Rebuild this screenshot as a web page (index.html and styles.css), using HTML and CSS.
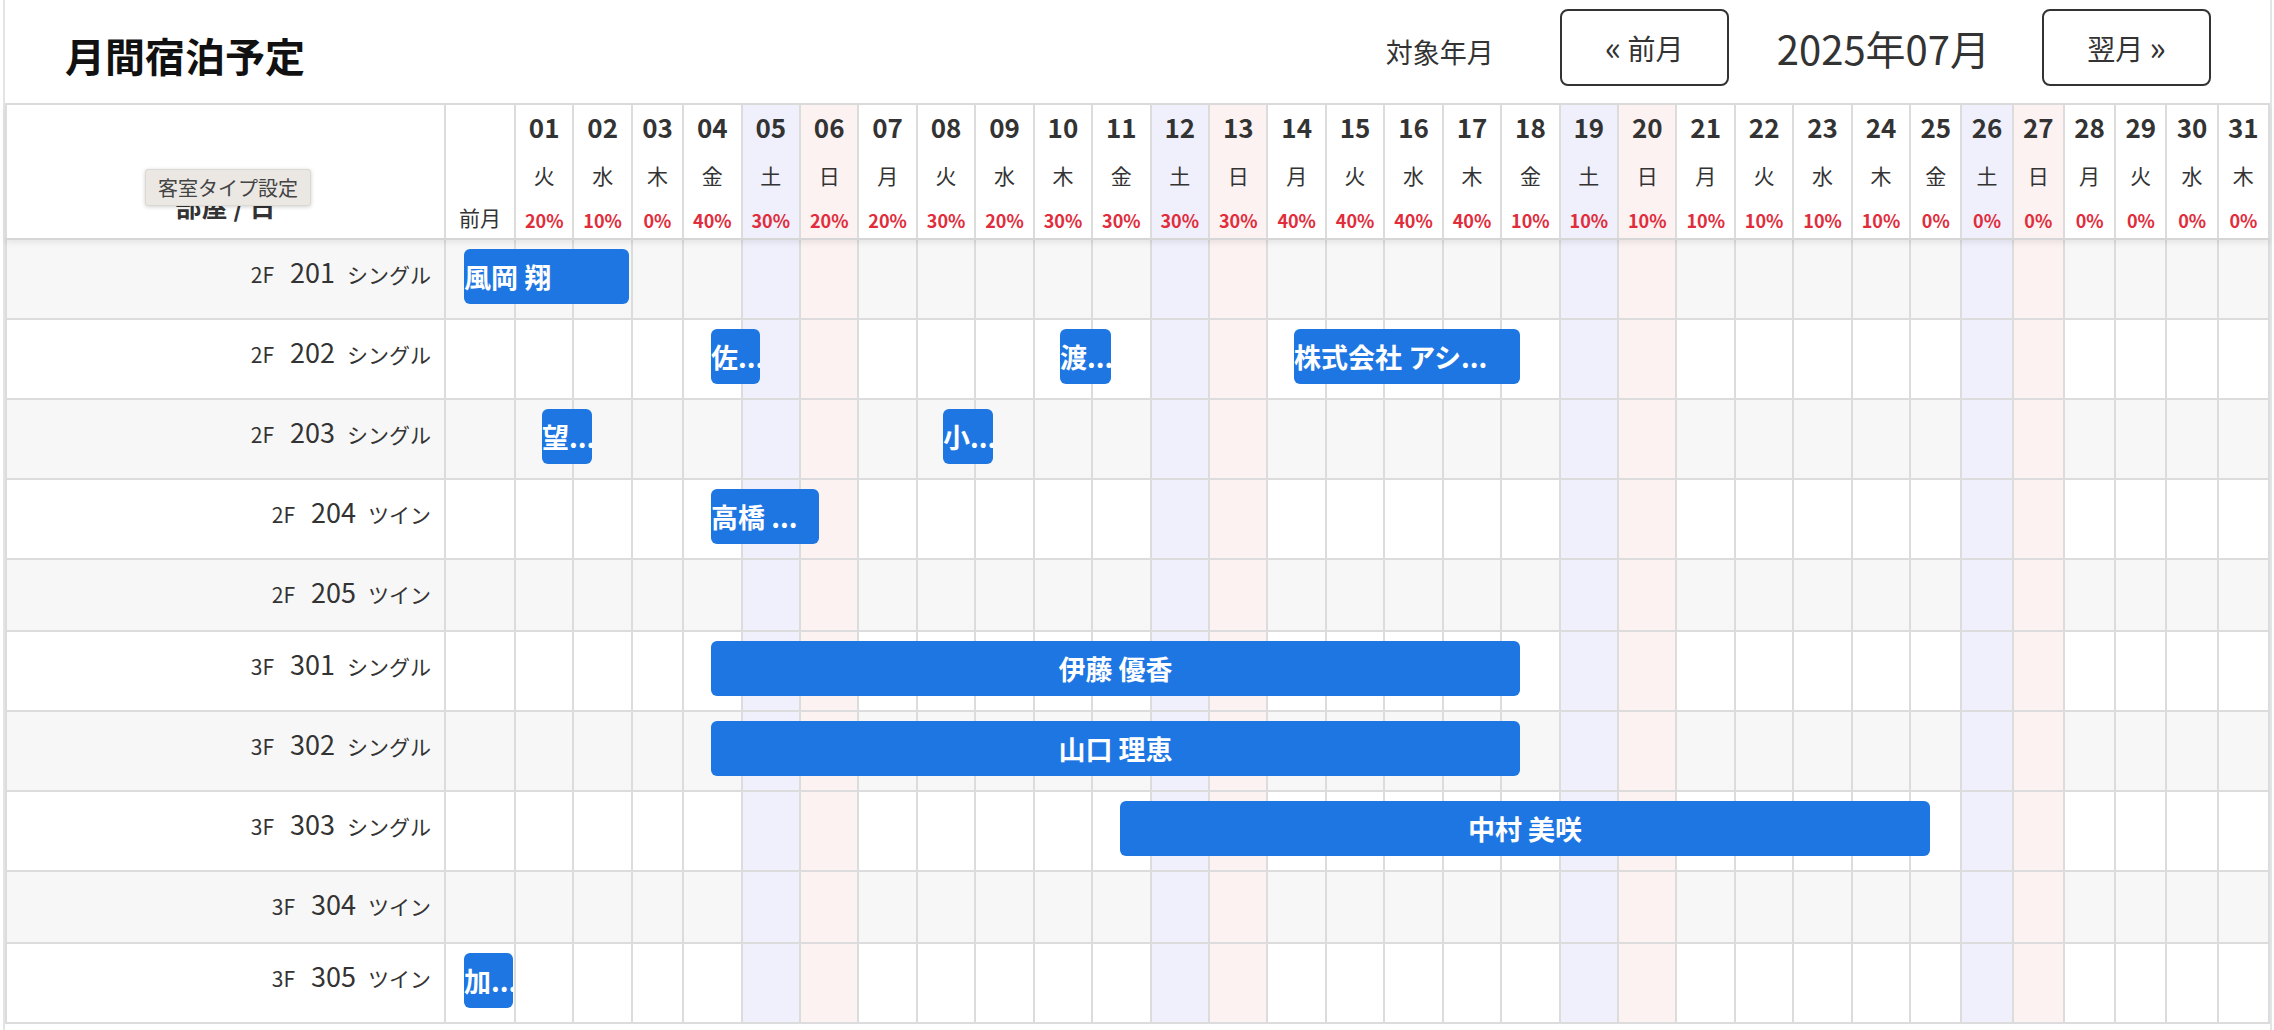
FILE: index.html
```html
<!DOCTYPE html>
<html lang="ja">
<head>
<meta charset="utf-8">
<title>月間宿泊予定</title>
<link rel="stylesheet" href="styles.css">
</head>
<body>
<div class="page">
  <header class="topbar">
    <h1 class="title">月間宿泊予定</h1>
    <div class="controls">
      <span class="target-label">対象年月</span>
      <button class="nav-btn" type="button"><span class="chev">«</span> 前月</button>
      <span class="current-month">2025年07月</span>
      <button class="nav-btn" type="button">翌月 <span class="chev">»</span></button>
    </div>
  </header>

  <div class="schedule">
    <div class="grid-row head-row">
      <div class="c room-head"><span class="room-head-label">部屋 / 日</span><div class="tooltip">客室タイプ設定</div></div>
      <div class="c prev-head"><span>前月</span></div>
      <div class="c dh"><span class="dnum">01</span><span class="wday">火</span><span class="pct">20%</span></div>
      <div class="c dh"><span class="dnum">02</span><span class="wday">水</span><span class="pct">10%</span></div>
      <div class="c dh"><span class="dnum">03</span><span class="wday">木</span><span class="pct">0%</span></div>
      <div class="c dh"><span class="dnum">04</span><span class="wday">金</span><span class="pct">40%</span></div>
      <div class="c dh sat"><span class="dnum">05</span><span class="wday">土</span><span class="pct">30%</span></div>
      <div class="c dh sun"><span class="dnum">06</span><span class="wday">日</span><span class="pct">20%</span></div>
      <div class="c dh"><span class="dnum">07</span><span class="wday">月</span><span class="pct">20%</span></div>
      <div class="c dh"><span class="dnum">08</span><span class="wday">火</span><span class="pct">30%</span></div>
      <div class="c dh"><span class="dnum">09</span><span class="wday">水</span><span class="pct">20%</span></div>
      <div class="c dh"><span class="dnum">10</span><span class="wday">木</span><span class="pct">30%</span></div>
      <div class="c dh"><span class="dnum">11</span><span class="wday">金</span><span class="pct">30%</span></div>
      <div class="c dh sat"><span class="dnum">12</span><span class="wday">土</span><span class="pct">30%</span></div>
      <div class="c dh sun"><span class="dnum">13</span><span class="wday">日</span><span class="pct">30%</span></div>
      <div class="c dh"><span class="dnum">14</span><span class="wday">月</span><span class="pct">40%</span></div>
      <div class="c dh"><span class="dnum">15</span><span class="wday">火</span><span class="pct">40%</span></div>
      <div class="c dh"><span class="dnum">16</span><span class="wday">水</span><span class="pct">40%</span></div>
      <div class="c dh"><span class="dnum">17</span><span class="wday">木</span><span class="pct">40%</span></div>
      <div class="c dh"><span class="dnum">18</span><span class="wday">金</span><span class="pct">10%</span></div>
      <div class="c dh sat"><span class="dnum">19</span><span class="wday">土</span><span class="pct">10%</span></div>
      <div class="c dh sun"><span class="dnum">20</span><span class="wday">日</span><span class="pct">10%</span></div>
      <div class="c dh"><span class="dnum">21</span><span class="wday">月</span><span class="pct">10%</span></div>
      <div class="c dh"><span class="dnum">22</span><span class="wday">火</span><span class="pct">10%</span></div>
      <div class="c dh"><span class="dnum">23</span><span class="wday">水</span><span class="pct">10%</span></div>
      <div class="c dh"><span class="dnum">24</span><span class="wday">木</span><span class="pct">10%</span></div>
      <div class="c dh"><span class="dnum">25</span><span class="wday">金</span><span class="pct">0%</span></div>
      <div class="c dh sat"><span class="dnum">26</span><span class="wday">土</span><span class="pct">0%</span></div>
      <div class="c dh sun"><span class="dnum">27</span><span class="wday">日</span><span class="pct">0%</span></div>
      <div class="c dh"><span class="dnum">28</span><span class="wday">月</span><span class="pct">0%</span></div>
      <div class="c dh"><span class="dnum">29</span><span class="wday">火</span><span class="pct">0%</span></div>
      <div class="c dh"><span class="dnum">30</span><span class="wday">水</span><span class="pct">0%</span></div>
      <div class="c dh"><span class="dnum">31</span><span class="wday">木</span><span class="pct">0%</span></div>
    </div>

    <div class="grid-row body-row odd tall">
      <div class="c room"><span class="floor">2F</span><span class="rno">201</span><span class="rtype">シングル</span></div>
      <div class="c"></div><div class="c"></div><div class="c"></div><div class="c"></div><div class="c"></div>
      <div class="c sat"></div><div class="c sun"></div>
      <div class="c"></div><div class="c"></div><div class="c"></div><div class="c"></div><div class="c"></div>
      <div class="c sat"></div><div class="c sun"></div>
      <div class="c"></div><div class="c"></div><div class="c"></div><div class="c"></div><div class="c"></div>
      <div class="c sat"></div><div class="c sun"></div>
      <div class="c"></div><div class="c"></div><div class="c"></div><div class="c"></div><div class="c"></div>
      <div class="c sat"></div><div class="c sun"></div>
      <div class="c"></div><div class="c"></div><div class="c"></div><div class="c"></div>
      <div class="booking start" style="left:459px;width:165px">風岡 翔</div>
    </div>

    <div class="grid-row body-row tall">
      <div class="c room"><span class="floor">2F</span><span class="rno">202</span><span class="rtype">シングル</span></div>
      <div class="c"></div><div class="c"></div><div class="c"></div><div class="c"></div><div class="c"></div>
      <div class="c sat"></div><div class="c sun"></div>
      <div class="c"></div><div class="c"></div><div class="c"></div><div class="c"></div><div class="c"></div>
      <div class="c sat"></div><div class="c sun"></div>
      <div class="c"></div><div class="c"></div><div class="c"></div><div class="c"></div><div class="c"></div>
      <div class="c sat"></div><div class="c sun"></div>
      <div class="c"></div><div class="c"></div><div class="c"></div><div class="c"></div><div class="c"></div>
      <div class="c sat"></div><div class="c sun"></div>
      <div class="c"></div><div class="c"></div><div class="c"></div><div class="c"></div>
      <div class="booking start" style="left:706px;width:49px">佐...</div>
      <div class="booking start" style="left:1055px;width:51px">渡...</div>
      <div class="booking start" style="left:1289px;width:226px">株式会社 アシ...</div>
    </div>

    <div class="grid-row body-row odd tall">
      <div class="c room"><span class="floor">2F</span><span class="rno">203</span><span class="rtype">シングル</span></div>
      <div class="c"></div><div class="c"></div><div class="c"></div><div class="c"></div><div class="c"></div>
      <div class="c sat"></div><div class="c sun"></div>
      <div class="c"></div><div class="c"></div><div class="c"></div><div class="c"></div><div class="c"></div>
      <div class="c sat"></div><div class="c sun"></div>
      <div class="c"></div><div class="c"></div><div class="c"></div><div class="c"></div><div class="c"></div>
      <div class="c sat"></div><div class="c sun"></div>
      <div class="c"></div><div class="c"></div><div class="c"></div><div class="c"></div><div class="c"></div>
      <div class="c sat"></div><div class="c sun"></div>
      <div class="c"></div><div class="c"></div><div class="c"></div><div class="c"></div>
      <div class="booking start" style="left:537px;width:50px">望...</div>
      <div class="booking start" style="left:938px;width:50px">小...</div>
    </div>

    <div class="grid-row body-row tall">
      <div class="c room"><span class="floor">2F</span><span class="rno">204</span><span class="rtype">ツイン</span></div>
      <div class="c"></div><div class="c"></div><div class="c"></div><div class="c"></div><div class="c"></div>
      <div class="c sat"></div><div class="c sun"></div>
      <div class="c"></div><div class="c"></div><div class="c"></div><div class="c"></div><div class="c"></div>
      <div class="c sat"></div><div class="c sun"></div>
      <div class="c"></div><div class="c"></div><div class="c"></div><div class="c"></div><div class="c"></div>
      <div class="c sat"></div><div class="c sun"></div>
      <div class="c"></div><div class="c"></div><div class="c"></div><div class="c"></div><div class="c"></div>
      <div class="c sat"></div><div class="c sun"></div>
      <div class="c"></div><div class="c"></div><div class="c"></div><div class="c"></div>
      <div class="booking start" style="left:706px;width:108px">高橋 ...</div>
    </div>

    <div class="grid-row body-row odd short">
      <div class="c room"><span class="floor">2F</span><span class="rno">205</span><span class="rtype">ツイン</span></div>
      <div class="c"></div><div class="c"></div><div class="c"></div><div class="c"></div><div class="c"></div>
      <div class="c sat"></div><div class="c sun"></div>
      <div class="c"></div><div class="c"></div><div class="c"></div><div class="c"></div><div class="c"></div>
      <div class="c sat"></div><div class="c sun"></div>
      <div class="c"></div><div class="c"></div><div class="c"></div><div class="c"></div><div class="c"></div>
      <div class="c sat"></div><div class="c sun"></div>
      <div class="c"></div><div class="c"></div><div class="c"></div><div class="c"></div><div class="c"></div>
      <div class="c sat"></div><div class="c sun"></div>
      <div class="c"></div><div class="c"></div><div class="c"></div><div class="c"></div>
    </div>

    <div class="grid-row body-row tall">
      <div class="c room"><span class="floor">3F</span><span class="rno">301</span><span class="rtype">シングル</span></div>
      <div class="c"></div><div class="c"></div><div class="c"></div><div class="c"></div><div class="c"></div>
      <div class="c sat"></div><div class="c sun"></div>
      <div class="c"></div><div class="c"></div><div class="c"></div><div class="c"></div><div class="c"></div>
      <div class="c sat"></div><div class="c sun"></div>
      <div class="c"></div><div class="c"></div><div class="c"></div><div class="c"></div><div class="c"></div>
      <div class="c sat"></div><div class="c sun"></div>
      <div class="c"></div><div class="c"></div><div class="c"></div><div class="c"></div><div class="c"></div>
      <div class="c sat"></div><div class="c sun"></div>
      <div class="c"></div><div class="c"></div><div class="c"></div><div class="c"></div>
      <div class="booking" style="left:706px;width:809px">伊藤 優香</div>
    </div>

    <div class="grid-row body-row odd tall">
      <div class="c room"><span class="floor">3F</span><span class="rno">302</span><span class="rtype">シングル</span></div>
      <div class="c"></div><div class="c"></div><div class="c"></div><div class="c"></div><div class="c"></div>
      <div class="c sat"></div><div class="c sun"></div>
      <div class="c"></div><div class="c"></div><div class="c"></div><div class="c"></div><div class="c"></div>
      <div class="c sat"></div><div class="c sun"></div>
      <div class="c"></div><div class="c"></div><div class="c"></div><div class="c"></div><div class="c"></div>
      <div class="c sat"></div><div class="c sun"></div>
      <div class="c"></div><div class="c"></div><div class="c"></div><div class="c"></div><div class="c"></div>
      <div class="c sat"></div><div class="c sun"></div>
      <div class="c"></div><div class="c"></div><div class="c"></div><div class="c"></div>
      <div class="booking" style="left:706px;width:809px">山口 理恵</div>
    </div>

    <div class="grid-row body-row tall">
      <div class="c room"><span class="floor">3F</span><span class="rno">303</span><span class="rtype">シングル</span></div>
      <div class="c"></div><div class="c"></div><div class="c"></div><div class="c"></div><div class="c"></div>
      <div class="c sat"></div><div class="c sun"></div>
      <div class="c"></div><div class="c"></div><div class="c"></div><div class="c"></div><div class="c"></div>
      <div class="c sat"></div><div class="c sun"></div>
      <div class="c"></div><div class="c"></div><div class="c"></div><div class="c"></div><div class="c"></div>
      <div class="c sat"></div><div class="c sun"></div>
      <div class="c"></div><div class="c"></div><div class="c"></div><div class="c"></div><div class="c"></div>
      <div class="c sat"></div><div class="c sun"></div>
      <div class="c"></div><div class="c"></div><div class="c"></div><div class="c"></div>
      <div class="booking" style="left:1115px;width:810px">中村 美咲</div>
    </div>

    <div class="grid-row body-row odd short">
      <div class="c room"><span class="floor">3F</span><span class="rno">304</span><span class="rtype">ツイン</span></div>
      <div class="c"></div><div class="c"></div><div class="c"></div><div class="c"></div><div class="c"></div>
      <div class="c sat"></div><div class="c sun"></div>
      <div class="c"></div><div class="c"></div><div class="c"></div><div class="c"></div><div class="c"></div>
      <div class="c sat"></div><div class="c sun"></div>
      <div class="c"></div><div class="c"></div><div class="c"></div><div class="c"></div><div class="c"></div>
      <div class="c sat"></div><div class="c sun"></div>
      <div class="c"></div><div class="c"></div><div class="c"></div><div class="c"></div><div class="c"></div>
      <div class="c sat"></div><div class="c sun"></div>
      <div class="c"></div><div class="c"></div><div class="c"></div><div class="c"></div>
    </div>

    <div class="grid-row body-row tall">
      <div class="c room"><span class="floor">3F</span><span class="rno">305</span><span class="rtype">ツイン</span></div>
      <div class="c"></div><div class="c"></div><div class="c"></div><div class="c"></div><div class="c"></div>
      <div class="c sat"></div><div class="c sun"></div>
      <div class="c"></div><div class="c"></div><div class="c"></div><div class="c"></div><div class="c"></div>
      <div class="c sat"></div><div class="c sun"></div>
      <div class="c"></div><div class="c"></div><div class="c"></div><div class="c"></div><div class="c"></div>
      <div class="c sat"></div><div class="c sun"></div>
      <div class="c"></div><div class="c"></div><div class="c"></div><div class="c"></div><div class="c"></div>
      <div class="c sat"></div><div class="c sun"></div>
      <div class="c"></div><div class="c"></div><div class="c"></div><div class="c"></div>
      <div class="booking start" style="left:459px;width:49px">加...</div>
    </div>
  </div>
</div>
</body>
</html>
```

FILE: styles.css
```css
* { box-sizing: border-box; }

html, body {
  margin: 0;
  padding: 0;
  background: #fff;
}

body {
  font-family: "Noto Sans CJK JP", "Noto Sans", sans-serif;
  color: #333;
}

.page {
  margin: 0 2px 0 3px;
  border-left: 2px solid #e1e5e8;
  border-right: 2px solid #e1e5e8;
  min-height: 1030px;
}

/* ---------- top bar ---------- */
.topbar {
  height: 103px;
  display: flex;
  align-items: flex-start;
  justify-content: space-between;
  padding: 9px 59px 0 60px;
}

.title {
  margin: 18px 0 0;
  font-size: 40px;
  line-height: 56px;
  font-weight: 700;
  color: #111;
}

.controls {
  display: flex;
  align-items: center;
  height: 77px;
}

.target-label {
  font-size: 27px;
  line-height: 36px;
  margin-right: 66px;
  padding-top: 8px;
  color: #333;
}

.nav-btn {
  width: 169px;
  height: 77px;
  padding: 0;
  border: 2px solid #333;
  border-radius: 8px;
  background: #fff;
  font-family: inherit;
  font-size: 28px;
  color: #333;
}

.chev {
  font-size: 34px;
  line-height: 1;
  vertical-align: -1px;
}

.current-month {
  font-size: 40px;
  line-height: 50px;
  margin: 0 52px 0 48px;
  color: #333;
}

/* ---------- schedule grid ---------- */
.schedule {
  border-top: 2px solid #dcdcdc;
}

.grid-row {
  position: relative;
  display: grid;
  grid-template-columns: 441px 70px repeat(2, 58.43fr) 51.25fr repeat(21, 58.43fr) repeat(7, 51.25fr);
  border-bottom: 2px solid #dcdcdc;
}

.c {
  border-right: 2px solid #dcdcdc;
  min-width: 0;
}

.sat { background: #f0f0fc; }
.sun { background: #fdf2f2; }

.head-row {
  height: 135px;
  background: #fff;
  z-index: 2;
  box-shadow: 0 3px 6px rgba(0, 0, 0, 0.07);
  border-bottom-color: #d6d6d6;
}

.room-head {
  position: relative;
  display: flex;
  align-items: flex-end;
  justify-content: center;
  padding-bottom: 17px;
  border-left: 2px solid #dcdcdc;
}

.room-head-label {
  font-size: 26px;
  line-height: 30px;
  font-weight: 700;
  color: #333;
}

.tooltip {
  position: absolute;
  left: 138px;
  top: 64px;
  height: 37px;
  padding: 0 12px;
  background: #ebe8e4;
  border: 1px solid #dcd8d2;
  border-radius: 3px;
  box-shadow: 0 1px 4px rgba(0, 0, 0, 0.18);
  font-size: 20px;
  line-height: 35px;
  color: #444;
  white-space: nowrap;
}

.prev-head {
  display: flex;
  align-items: flex-end;
  justify-content: center;
  padding-bottom: 8px;
  font-size: 21px;
  line-height: 26px;
}

.dh {
  display: flex;
  flex-direction: column;
  align-items: center;
  padding-top: 4px;
}

.dnum {
  font-size: 26px;
  line-height: 36px;
  font-weight: 700;
  color: #333;
}

.wday {
  margin-top: 15px;
  font-size: 21px;
  line-height: 30px;
  color: #333;
}

.pct {
  margin-top: 17px;
  font-size: 18px;
  line-height: 26px;
  font-weight: 700;
  color: #e12c3c;
}

/* ---------- body rows ---------- */
.body-row { background: #fff; }
.body-row.odd { background: #f7f7f7; }
.tall { height: 80px; }
.short { height: 72px; }

.room {
  border-left: 2px solid #dcdcdc;
  text-align: right;
  padding: 17px 13px 0 0;
  line-height: 30px;
  white-space: nowrap;
  color: #333;
}

.floor { font-size: 21px; }
.rno { font-size: 27px; margin-left: 16px; }
.rtype { font-size: 21px; margin-left: 12px; }

.booking {
  position: absolute;
  top: 9px;
  height: 55px;
  background: #1e76e3;
  color: #fff;
  border-radius: 6px;
  font-size: 27px;
  font-weight: 700;
  line-height: 55px;
  text-align: center;
  white-space: nowrap;
  overflow: hidden;
  z-index: 1;
}

.booking.start { text-align: left; }
```
